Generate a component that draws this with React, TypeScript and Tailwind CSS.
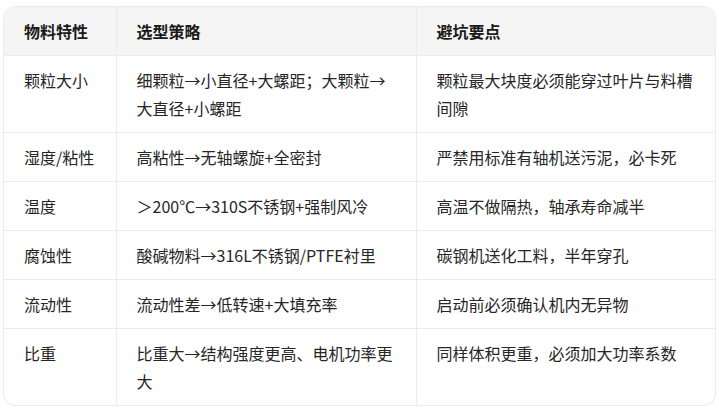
const rows: [string, string, string][] = [
  ['颗粒大小', '细颗粒→小直径+大螺距；大颗粒→大直径+小螺距', '颗粒最大块度必须能穿过叶片与料槽间隙'],
  ['湿度/粘性', '高粘性→无轴螺旋+全密封', '严禁用标准有轴机送污泥，必卡死'],
  ['温度', '＞200℃→310S不锈钢+强制风冷', '高温不做隔热，轴承寿命减半'],
  ['腐蚀性', '酸碱物料→316L不锈钢/PTFE衬里', '碳钢机送化工料，半年穿孔'],
  ['流动性', '流动性差→低转速+大填充率', '启动前必须确认机内无异物'],
  ['比重', '比重大→结构强度更高、电机功率更大', '同样体积更重，必须加大功率系数'],
];

export default function App() {
  return (
    <div
      className="bg-white pt-[6px] px-[3px] w-[719px]"
      style={{ fontFamily: '"Noto Sans CJK SC", "Noto Sans", sans-serif' }}
    >
      <div className="border border-[#ebebeb] rounded-[12px] overflow-hidden">
        <table className="w-full table-fixed border-collapse text-[16px] leading-[28px]">
          <colgroup>
            <col className="w-[112px]" />
            <col className="w-[300px]" />
            <col />
          </colgroup>
          <thead>
            <tr className="bg-[#f5f5f5]">
              <th className="text-left font-bold text-[#1a1a1a] px-[20px] py-[10px] border-b border-[#ebebeb]">物料特性</th>
              <th className="text-left font-bold text-[#1a1a1a] px-[20px] py-[10px] border-b border-l border-[#ebebeb]">选型策略</th>
              <th className="text-left font-bold text-[#1a1a1a] px-[20px] py-[10px] border-b border-l border-[#ebebeb]">避坑要点</th>
            </tr>
          </thead>
          <tbody>
            {rows.map((r, i) => (
              <tr key={i} className="text-[#262626]">
                <td className={`align-top px-[20px] py-[10px] border-[#ebebeb] ${i < rows.length - 1 ? 'border-b' : ''}`}>{r[0]}</td>
                <td className={`align-top px-[20px] py-[10px] border-l border-[#ebebeb] ${i < rows.length - 1 ? 'border-b' : ''}`}>{r[1]}</td>
                <td className={`align-top px-[20px] py-[10px] border-l border-[#ebebeb] ${i < rows.length - 1 ? 'border-b' : ''}`}>{r[2]}</td>
              </tr>
            ))}
          </tbody>
        </table>
      </div>
    </div>
  );
}
